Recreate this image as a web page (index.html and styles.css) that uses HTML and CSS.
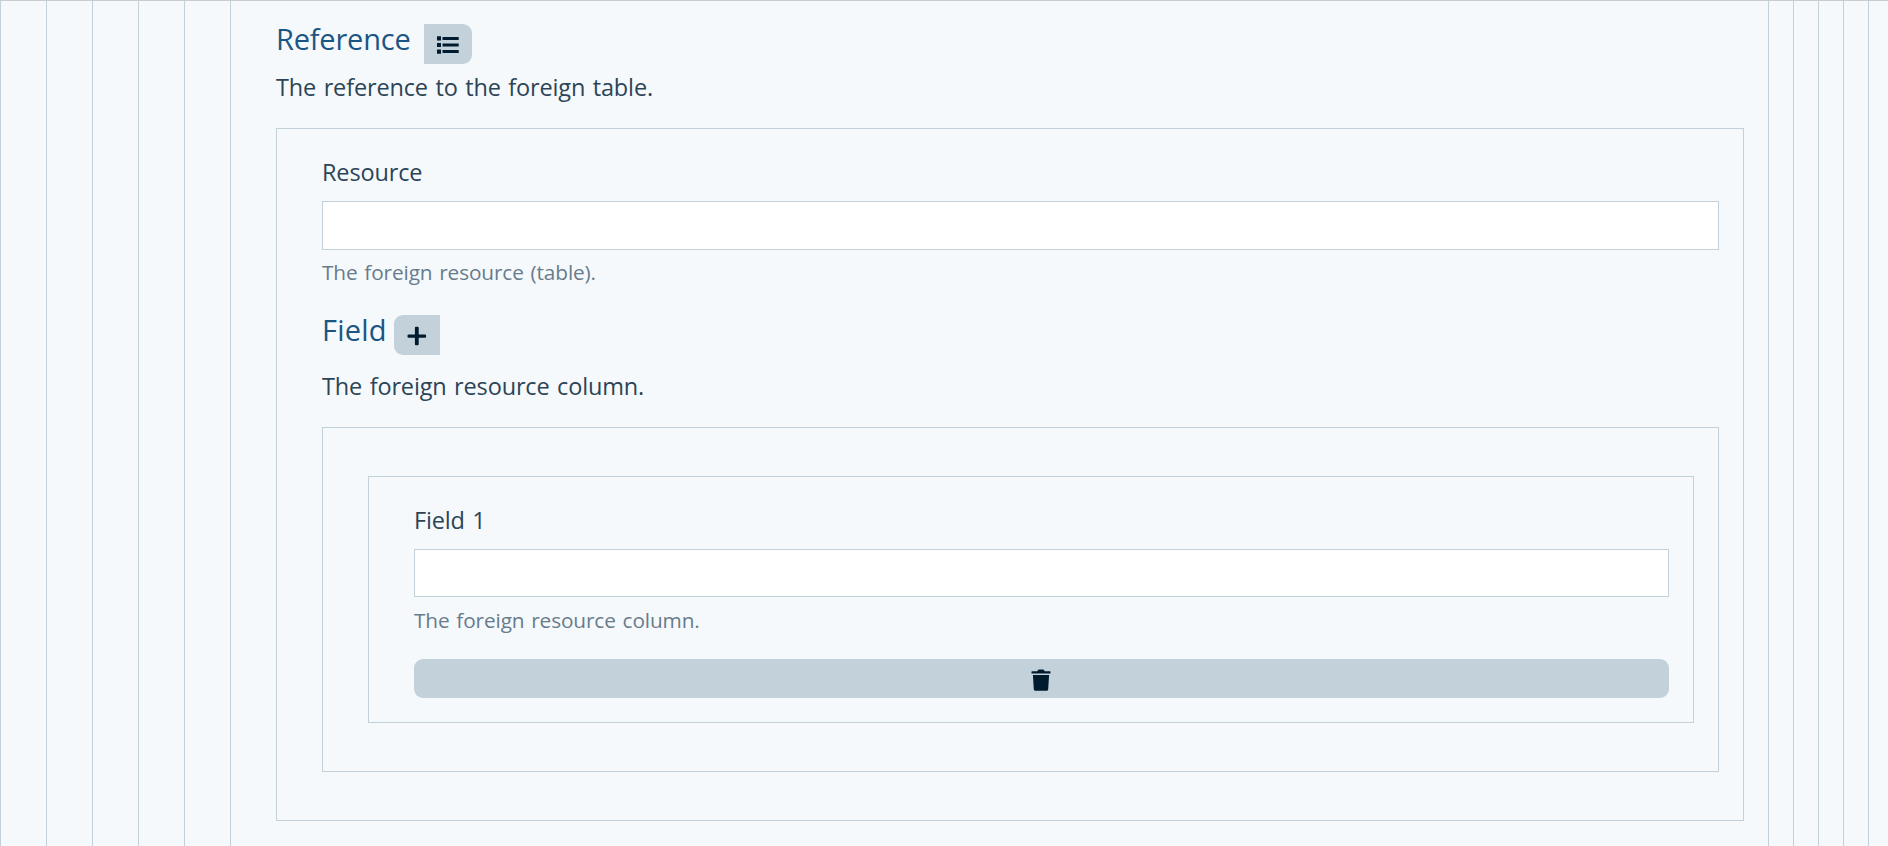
FILE: index.html
```html
<!DOCTYPE html>
<html lang="en">
<head>
<meta charset="utf-8">
<title>Reference</title>
<link rel="stylesheet" href="styles.css">
</head>
<body>
<main class="viewport">
<div class="level root"><div class="level"><div class="level"><div class="level"><div class="level"><div class="level">
  <section class="reference">
    <div class="heading heading-ref">
      <h2 class="title title-ref">Reference</h2>
      <button class="btn btn-right" aria-label="Properties">
        <svg class="icon-list" width="24" height="20" viewBox="0 0 24 20"><path d="M1 1.300h4v4.200H1zM1 7.900h4v4.200H1zM1 14.500h4v4.200H1zM6.500 2h16.200v3H6.500zM6.500 8.500h16.200v3H6.500zM6.500 15h16.200v3H6.500z"/></svg>
      </button>
    </div>
    <p class="desc desc-ref">The reference to the foreign table.</p>
    <div class="box box-ref">
      <label class="label label-resource" for="resource">Resource</label>
      <input class="input" id="resource" type="text">
      <small class="help help-resource">The foreign resource (table).</small>
      <div class="heading heading-field">
        <h2 class="title title-field">Field</h2>
        <button class="btn btn-left" aria-label="Add">
          <svg width="20" height="20" viewBox="0 0 20 20"><path d="M8.900.8h1.800q1 0 1 1v6.600h6.400q1 0 1 1v1.400q0 1-1 1h-6.400v6.500q0 1-1 1H8.900q-1 0-1-1v-6.500H1.500q-1 0-1-1V9.400q0-1 1-1h6.400V1.800q0-1 1-1z"/></svg>
        </button>
      </div>
      <p class="desc desc-field">The foreign resource column.</p>
      <div class="box box-list">
        <div class="box box-item">
          <label class="label label-field" for="field1">Field 1</label>
          <input class="input input-field" id="field1" type="text">
          <small class="help help-field">The foreign resource column.</small>
          <button class="btn btn-delete" aria-label="Delete">
            <svg class="icon-trash" width="20" height="23" viewBox="0 0 20 23"><path d="M1 2.200h5.300L7 .9q.2-.4.8-.4h4.400q.6 0 .8.400l.7 1.300H19q.5 0 .5.500V4.600H.5V2.700q0-.5.500-.5zM1.900 6h16.200l-.9 14.300q-.1 1.500-1.600 1.500H4.400q-1.500 0-1.600-1.500z"/></svg>
          </button>
        </div>
      </div>
    </div>
  </section>
</div></div></div></div></div></div>
</main>
</body>
</html>
```
FILE: styles.css
```css
* { box-sizing: border-box; }
body {
  margin: 0;
  background: #f5f9fc;
  color: #2c4456;
  font-family: "Open Sans", "Noto Sans", sans-serif;
}
.viewport {
  height: 846px;
  overflow: hidden;
  border-top: 1px solid #c9cbcd;
}
.level {
  height: 100%;
  padding: 0 24px 0 45px;
  border: solid #c3d1da;
  border-width: 0 1px;
}
.level .level { height: 845px; }
.root { width: 1894px; height: 845px; }
.reference { padding-top: 23px; }
.heading { display: flex; align-items: flex-start; height: 40px; }
.heading-ref { gap: 14px; }
.heading-field { gap: 8px; margin-top: 27px; }
.title {
  margin: 0;
  color: #1b5583;
  font-size: 29px;
  font-weight: 400;
  line-height: 29px;
  white-space: nowrap;
}
.title-ref { width: 134px; letter-spacing: -0.2px; }
.title-field { width: 64px; letter-spacing: 0.2px; }
.desc {
  margin: 5px 0 23px;
  font-size: 23.5px;
  line-height: 36px;
  letter-spacing: -0.15px;
  word-spacing: 1.6px;
}
.desc-field { margin-top: 13px; }
.box { border: 1px solid #c3d1da; padding: 25px 24px 48px 45px; }
.box-list { padding-top: 48px; }
.box-item { padding-bottom: 24px; }
.label {
  display: block;
  margin-bottom: 11px;
  font-size: 23.5px;
  line-height: 36px;
  letter-spacing: -0.15px;
  word-spacing: 1.6px;
}
.input {
  display: block;
  width: 100%;
  height: 49px;
  padding: 6px 12px;
  border: 1px solid #c3d1da;
  background: #fff;
}
.input-field { height: 48px; }
.help {
  display: block;
  margin-top: 6px;
  color: #687c8c;
  font-size: 20.8px;
  line-height: 32px;
  letter-spacing: -0.12px;
  word-spacing: 1.5px;
}
.help-field { margin-top: 7px; }
.btn {
  display: flex;
  align-items: center;
  justify-content: center;
  height: 40px;
  padding: 0;
  border: 0;
  background: #c3d1da;
  fill: #001b2e;
}
.btn-right { width: 48px; border-radius: 0 9px 9px 0; padding-top: 2px; }
.btn-left { width: 46px; border-radius: 9px 0 0 9px; padding-top: 2px; }
.btn-delete { width: 100%; height: 39px; margin-top: 23px; border-radius: 9px; padding: 3px 1px 0 0; }
```
